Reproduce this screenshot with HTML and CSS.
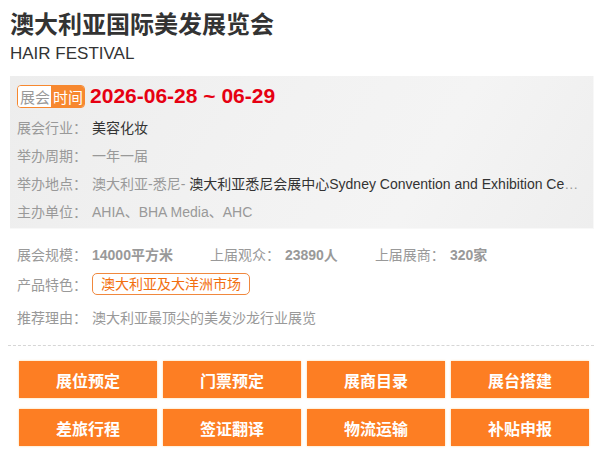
FILE: index.html
```html
<!DOCTYPE html>
<html lang="zh-CN">
<head>
<meta charset="utf-8">
<title>澳大利亚国际美发展览会</title>
<link rel="stylesheet" href="styles.css">
</head>
<body>
<div class="page">
  <h1 class="title">澳大利亚国际美发展览会</h1>
  <div class="subtitle">HAIR FESTIVAL</div>

  <div class="infobox">
    <div class="head">
      <span class="badge"><span class="badge-a">展会</span><span class="badge-b">时间</span></span>
      <span class="date">2026-06-28 ~ 06-29</span>
    </div>
    <div class="row"><span class="label">展会行业：</span><span class="val dark">美容化妆</span></div>
    <div class="row"><span class="label">举办周期：</span><span class="val">一年一届</span></div>
    <div class="row"><span class="label">举办地点：</span><span class="val ellip">澳大利亚-悉尼- <span class="dark">澳大利亚悉尼会展中心Sydney Convention and Exhibition Centre</span></span></div>
    <div class="row"><span class="label">主办单位：</span><span class="val">AHIA、BHA Media、AHC</span></div>
  </div>

  <div class="extra">
    <div class="row stats">
      <span class="stat"><span class="label">展会规模：</span><b class="num">14000平方米</b></span>
      <span class="stat"><span class="label">上届观众：</span><b class="num">23890人</b></span>
      <span class="stat"><span class="label">上届展商：</span><b class="num">320家</b></span>
    </div>
    <div class="row tagrow"><span class="label">产品特色：</span><span class="tag">澳大利亚及大洋洲市场</span></div>
    <div class="row reason"><span class="label">推荐理由：</span><span class="val">澳大利亚最顶尖的美发沙龙行业展览</span></div>
  </div>

  <div class="divider"></div>

  <div class="buttons">
    <a class="btn">展位预定</a>
    <a class="btn">门票预定</a>
    <a class="btn">展商目录</a>
    <a class="btn">展台搭建</a>
    <a class="btn">差旅行程</a>
    <a class="btn">签证翻译</a>
    <a class="btn">物流运输</a>
    <a class="btn">补贴申报</a>
  </div>
</div>
</body>
</html>
```

FILE: styles.css
```css
* { box-sizing: border-box; }
html, body { margin: 0; padding: 0; background: #fff; }
body {
  font-family: "Liberation Sans", "Noto Sans CJK SC", sans-serif;
  color: #333;
  width: 606px;
  height: 462px;
  overflow: hidden;
}
.page { padding: 0; }
.title {
  margin: 0;
  padding: 10px 0 0 10px;
  font-size: 24px;
  line-height: 30px;
  font-weight: bold;
  color: #333;
}
.subtitle {
  padding-left: 10px;
  margin-top: 3px;
  font-size: 17px;
  line-height: 22px;
  color: #333;
}
.infobox {
  margin: 11px 12px 0 10px;
  padding: 6px 14px 4px 7px;
  background: linear-gradient(120deg, #ededed 0%, #f2f2f2 45%, #f4f4f4 70%, #eeeeee 100%);
  box-shadow: inset -1px -1px 0 #f8f8f8;
}
.head {
  height: 28px;
  display: flex;
  align-items: center;
  margin-bottom: 3px;
}
.badge {
  display: inline-flex;
  border: 1px solid #f7882f;
  border-radius: 4px;
  overflow: hidden;
  font-size: 15px;
  line-height: 21px;
  font-family: "Noto Sans CJK SC", sans-serif;
}
.badge-a { background: #fff; color: #999; padding: 0 1px 0 2px; }
.badge-b { background: #f7882f; color: #fff; padding: 0 1px 0 2px; }
.date {
  margin-left: 5px;
  color: #e60012;
  font-weight: bold;
  font-size: 21px;
  line-height: 28px;
}
.row {
  display: flex;
  align-items: center;
  height: 28px;
  font-size: 14px;
  white-space: nowrap;
}
.label {
  width: 75px;
  flex: none;
  color: #999;
}
.val { color: #999; }
.dark { color: #333; }
.ellip {
  overflow: hidden;
  text-overflow: ellipsis;
  min-width: 0;
}
.extra { padding-left: 17px; margin-top: 11px; }
.stat { display: inline-flex; align-items: center; margin-right: 37px; }
.num { color: #999; font-weight: bold; }
.tagrow { height: 32px; }
.tag {
  color: #f26f0f;
  border: 1px solid #f0883e;
  border-radius: 5px;
  padding: 0 8px;
  line-height: 20px;
  font-size: 14px;
}
.reason { margin-top: 3px; }
.divider {
  margin: 14px 12px 0 8px;
  border-top: 1px dashed #d6d6d6;
}
.buttons {
  display: grid;
  grid-template-columns: repeat(4, 138px);
  column-gap: 6px;
  row-gap: 11px;
  padding: 15px 0 0 19px;
}
.btn {
  height: 37px;
  background: #fd7e23;
  color: #fff;
  font-family: "Noto Sans CJK SC", sans-serif;
  font-weight: bold;
  font-size: 16px;
  display: flex;
  align-items: center;
  justify-content: center;
  box-shadow: 0 0 2px #ffd79a;
  text-decoration: none;
}
```
